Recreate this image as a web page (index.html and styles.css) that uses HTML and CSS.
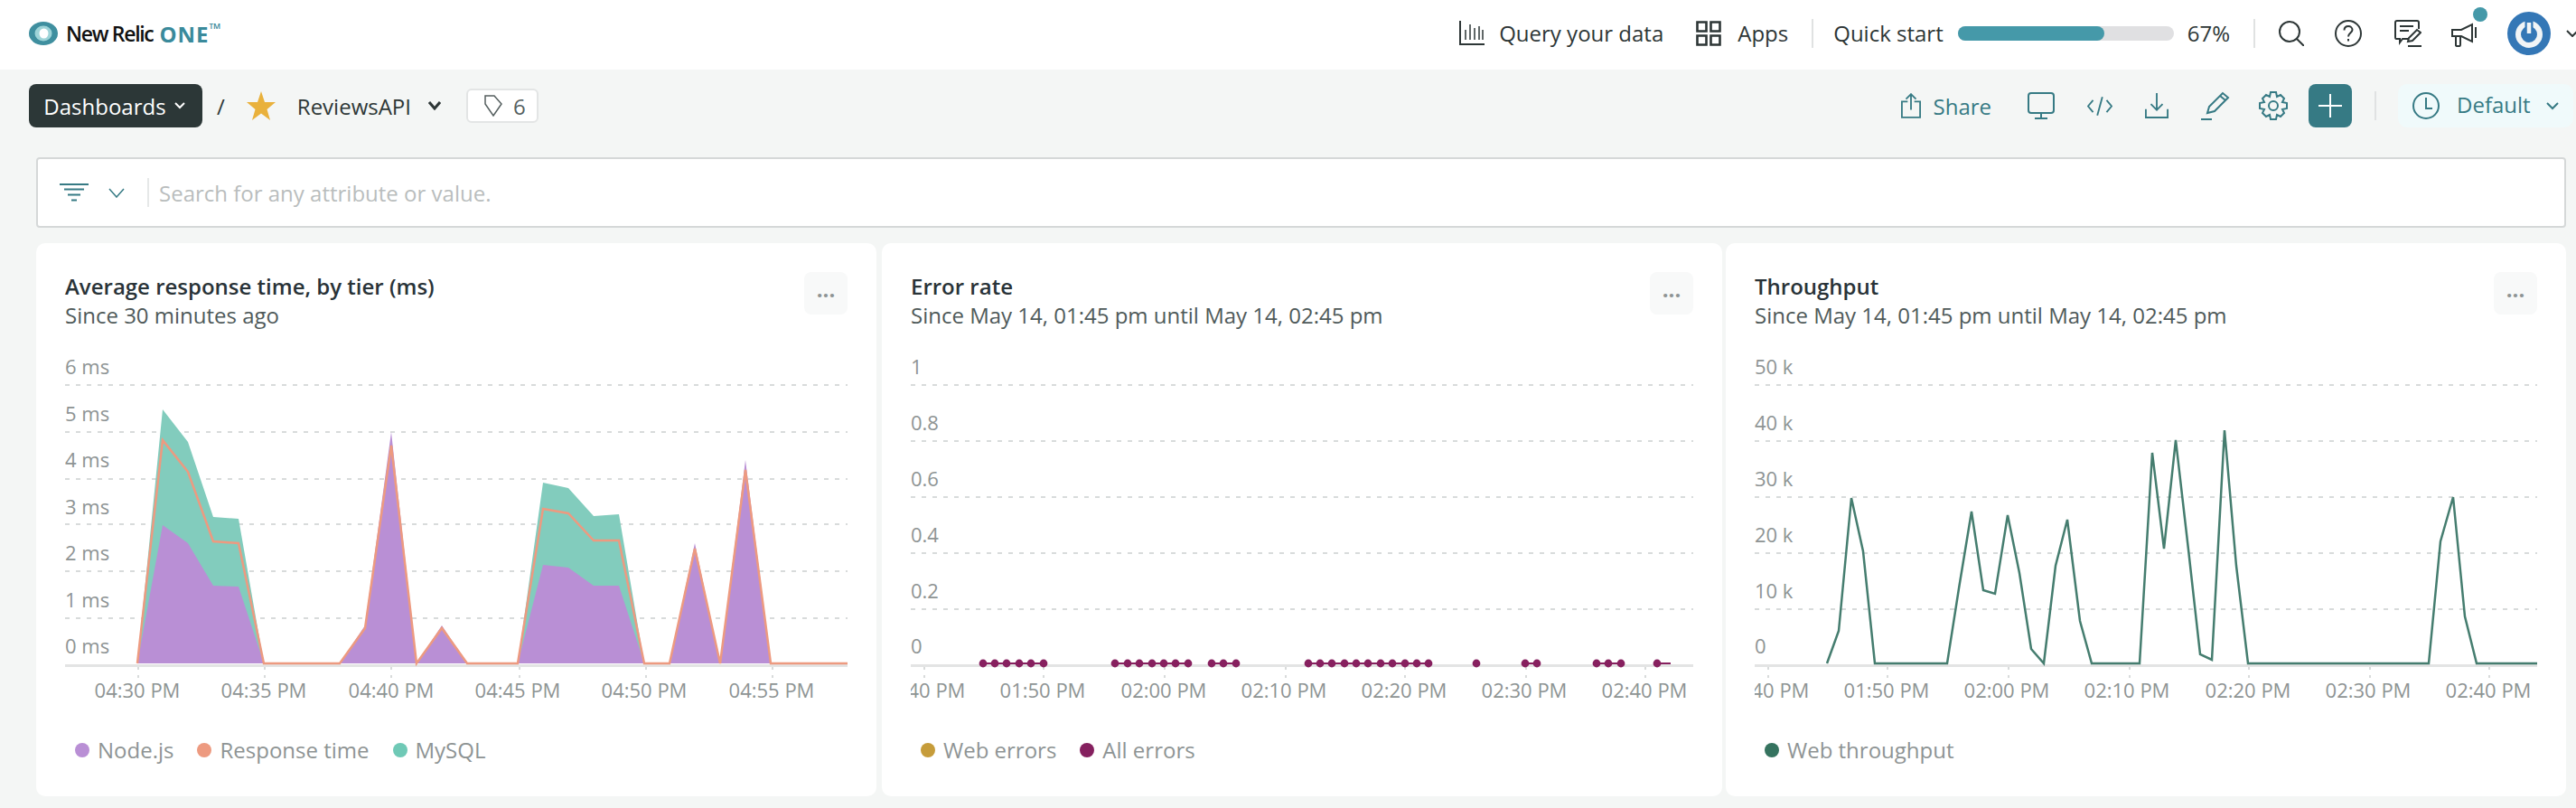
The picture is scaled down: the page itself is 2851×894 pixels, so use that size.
FILE: index.html
```html
<!DOCTYPE html>
<html lang="en">

<head>
    <meta charset="UTF-8">
    <title>ReviewsAPI - New Relic ONE</title>
    <link rel="stylesheet" href="styles.css">
</head>

<body>
    <div class="topbar">
        <div class="logo">
            <svg class="logo-mark" viewBox="0 0 32 32"><ellipse cx="16" cy="16" rx="16" ry="13" fill="#3f8f9f"/><ellipse cx="16" cy="16" rx="9.500" ry="8.500" fill="#9ed4d8"/><ellipse cx="16.500" cy="16" rx="5" ry="5.500" fill="#fff"/></svg>
            <span class="logo-name">New Relic</span>
            <span class="logo-one">ONE<sup>™</sup></span>
        </div>
        <div class="topnav">
            <svg class="nav-icon" viewBox="0 0 28 28"><path d="M1 0V26H28"/><path stroke-width="1.500" d="M7 10V21M12 4V21M17 8V21M22 6V21M26 10V21"/></svg>
            <span class="nav-text query">Query your data</span>
            <svg class="nav-icon" viewBox="0 0 28 28"><path stroke-width="2.600" d="M1.500 1.500H11.500V11.500H1.500ZM16.500 1.500H26.500V11.500H16.500ZM1.500 16.500H11.500V26.500H1.500ZM16.500 16.500H26.500V26.500H16.500Z"/></svg>
            <span class="nav-text apps">Apps</span>
            <span class="divider"></span>
            <span class="nav-text quick">Quick start</span>
            <div class="progress"><div class="progress-fill" style="width: 68%"></div></div>
            <span class="nav-text percent">67%</span>
            <span class="divider"></span>
            <svg class="nav-icon search" viewBox="0 0 28 28"><circle cx="12" cy="12" r="11"/><path d="M20 20L28 28"/></svg>
            <svg class="nav-icon help" viewBox="0 0 30 30"><circle cx="15" cy="15" r="14"/><path d="M10.500 11.500C10.500 8.500 12.500 7 15 7C17.500 7 19.500 8.800 19.500 11C19.500 14 15 14.500 15 18.500M15 21V23.500"/></svg>
            <svg class="nav-icon feedback" viewBox="0 0 30 30"><path d="M16 21H9L6 25V21H2C1 21 1 20 1 19V3C1 2 2 1 3 1H25C26 1 27 2 27 3V10M6 7H21M6 12H16"/><path d="M15 24L16 20L25 11L29 14L20 23ZM15 29H30"/></svg>
            <div class="announce">
                <svg class="nav-icon megaphone" viewBox="0 0 34 30"><path d="M2 11H12L24 5V24L12 18H2ZM6 18V28C6 29 7 29 8 29H10C11 29 11 28 11 27V18M28 8V20"/></svg>
                <span class="badge"></span>
            </div>
            <svg class="avatar" viewBox="0 0 48 48"><circle cx="24" cy="24" r="24" fill="#3477b6"/><circle cx="24" cy="25" r="12" fill="none" stroke="#f1f4f6" stroke-width="6"/><path d="M24 8V22" stroke="#3477b6" stroke-width="9"/><path d="M24 12V24" stroke="#f1f4f6" stroke-width="4.500"/></svg>
            <svg class="nav-icon caret" viewBox="0 0 14 8"><path d="M1 1L7 7L13 1"/></svg>
        </div>
    </div>

    <div class="toolbar">
        <button class="crumb-btn">Dashboards <svg class="crumb-caret" viewBox="0 0 12 8"><path d="M1 1L6 6L11 1"/></svg></button>
        <span class="slash">/</span>
        <svg class="star" viewBox="0 0 32 32"><path d="M16 0L20 12H32L22.500 20L26 32L16 24.500L6 32L9.500 20L0 12H12Z"/></svg>
        <span class="dash-name">ReviewsAPI</span>
        <svg class="name-caret" viewBox="0 0 14 10"><path d="M1 1L7 8L13 1"/></svg>
        <span class="tag-box">
            <svg class="tag-icon" viewBox="0 0 20 24"><path d="M1 1H11L19 10L10 23L1 10Z"/></svg>
            6
        </span>
        <div class="actions">
            <svg class="act-icon share-icon" viewBox="0 0 24 30"><path d="M8 10H1V29H23V10H16M12 20V1M6 7L12 1L18 7"/></svg>
            <span class="share">Share</span>
            <svg class="act-icon monitor" viewBox="0 0 30 30"><path d="M4 1H26C28 1 29 2 29 4V20C29 22 28 23 26 23H4C2 23 1 22 1 20V4C1 2 2 1 4 1ZM15 23V29M8 29H22"/></svg>
            <svg class="act-icon code" viewBox="0 0 30 24"><path d="M7 5L1 12L7 19M23 5L29 12L23 19M18 1L12 23"/></svg>
            <svg class="act-icon download" viewBox="0 0 28 30"><path d="M14 0V20M7 13L14 20L21 13M1 19V29H27V19"/></svg>
            <svg class="act-icon pencil" viewBox="0 0 32 32"><path d="M7 24L9 17L24 2L30 7L15 22ZM21 5L27 10M0 31H12"/></svg>
            <svg class="act-icon gear" viewBox="0 0 32 32"><circle cx="16" cy="16" r="5"/><path d="M13 1H19L20 6L24 4L28 8L26 12L31 13V19L26 20L28 24L24 28L20 26L19 31H13L12 26L8 28L4 24L6 20L1 19V13L6 12L4 8L8 4L12 6Z"/></svg>
            <button class="add-btn"><svg viewBox="0 0 26 26"><path d="M13 0V26M0 13H26"/></svg></button>
            <span class="divider tool-divider"></span>
            <button class="time-btn">
                <svg class="act-icon clock" viewBox="0 0 30 30"><circle cx="15" cy="15" r="14"/><path d="M15 6V18H22"/></svg>
                <span class="time-text">Default</span>
                <svg class="time-caret" viewBox="0 0 14 9"><path d="M1 1L7 7L13 1"/></svg>
            </button>
        </div>
    </div>

    <div class="filter-bar">
        <svg class="filter-icon" viewBox="0 0 32 20"><path d="M0 1H32M5 6.500H27M9 12.500H23M13 18.500H19"/></svg>
        <svg class="filter-caret" viewBox="0 0 18 11"><path d="M1 1L9 10L17 1"/></svg>
        <span class="filter-sep"></span>
        <span class="filter-hint">Search for any attribute or value.</span>
    </div>

    <div class="cards">
        <div class="card">
            <div class="card-head">
                <div>
                    <h2>Average response time, by tier (ms)</h2>
                    <p>Since 30 minutes ago</p>
                </div>
                <button class="menu-btn">...</button>
            </div>
            <svg class="chart" viewBox="72 390 866 390">
                <path class="grid" d="M72 426H938M72 478H938M72 530H938M72 580H938M72 632H938M72 684H938"/>
                <path class="axis" d="M72 736.500H938"/>
                <path class="ticks" d="M153 738V750M293 738V750M433 738V750M575 738V750M715 738V750M855 738V750"/>
                <text x="72" y="414">6 ms</text>
                <text x="72" y="466">5 ms</text>
                <text x="72" y="517">4 ms</text>
                <text x="72" y="569">3 ms</text>
                <text x="72" y="620">2 ms</text>
                <text x="72" y="672">1 ms</text>
                <text x="72" y="723">0 ms</text>
                <path fill="#82ccbd" d="M152 734L180 453L208 489L236 572L264 574L292 734ZM573 734L601 534L629 540L657 571L685 569L713 734Z"/>
                <path fill="#b98fd5" d="M152 734L180 581L208 601L236 648L264 649L292 734L376 734L404 692L433 478L461 734L489 692L517 734L573 734L601 625L629 628L657 648L685 648L713 734L741 734L769 601L797 734L825 509L853 734Z"/>
                <polyline class="line-orange" points="152,734 180,487 208,522 236,599 264,601 292,734 376,734 404,695 433,493 461,734 489,695 517,734 573,734 601,563 629,568 657,598 685,598 713,734 741,734 769,607 797,734 825,520 853,734 938,734"/>
                <text x="152" y="772" text-anchor="middle">04:30 PM</text>
                <text x="292" y="772" text-anchor="middle">04:35 PM</text>
                <text x="433" y="772" text-anchor="middle">04:40 PM</text>
                <text x="573" y="772" text-anchor="middle">04:45 PM</text>
                <text x="713" y="772" text-anchor="middle">04:50 PM</text>
                <text x="854" y="772" text-anchor="middle">04:55 PM</text>
            </svg>
            <div class="legend">
                <span class="legend-item"><i class="dot dot-node"></i>Node.js</span>
                <span class="legend-item"><i class="dot dot-resp"></i>Response time</span>
                <span class="legend-item"><i class="dot dot-mysql"></i>MySQL</span>
            </div>
        </div>

        <div class="card">
            <div class="card-head">
                <div>
                    <h2>Error rate</h2>
                    <p>Since May 14, 01:45 pm until May 14, 02:45 pm</p>
                </div>
                <button class="menu-btn">...</button>
            </div>
            <svg class="chart" viewBox="1008 390 866 390">
                <path class="grid" d="M1008 426H1874M1008 488H1874M1008 550H1874M1008 612H1874M1008 674H1874"/>
                <path class="axis" d="M1008 736.500H1874"/>
                <path class="ticks" d="M1023 738V750M1155 738V750M1289 738V750M1423 738V750M1555 738V750M1689 738V750M1821 738V750"/>
                <text x="1008" y="414">1</text>
                <text x="1008" y="476">0.8</text>
                <text x="1008" y="538">0.6</text>
                <text x="1008" y="600">0.4</text>
                <text x="1008" y="662">0.2</text>
                <text x="1008" y="723">0</text>
                <path class="line-errors" d="M1088 734H1155M1234 734H1315M1341 734H1368M1448 734H1581M1688 734H1701M1767 734H1794M1834 734H1849"/>
                <g class="err-dots">
                    <circle cx="1088" cy="734" r="4.400"/><circle cx="1101" cy="734" r="4.400"/><circle cx="1114" cy="734" r="4.400"/><circle cx="1128" cy="734" r="4.400"/><circle cx="1141" cy="734" r="4.400"/><circle cx="1155" cy="734" r="4.400"/>
                    <circle cx="1234" cy="734" r="4.400"/><circle cx="1248" cy="734" r="4.400"/><circle cx="1261" cy="734" r="4.400"/><circle cx="1275" cy="734" r="4.400"/><circle cx="1288" cy="734" r="4.400"/><circle cx="1301" cy="734" r="4.400"/><circle cx="1315" cy="734" r="4.400"/>
                    <circle cx="1341" cy="734" r="4.400"/><circle cx="1354" cy="734" r="4.400"/><circle cx="1368" cy="734" r="4.400"/>
                    <circle cx="1448" cy="734" r="4.400"/><circle cx="1461" cy="734" r="4.400"/><circle cx="1474" cy="734" r="4.400"/><circle cx="1488" cy="734" r="4.400"/><circle cx="1501" cy="734" r="4.400"/><circle cx="1514" cy="734" r="4.400"/><circle cx="1528" cy="734" r="4.400"/><circle cx="1541" cy="734" r="4.400"/><circle cx="1555" cy="734" r="4.400"/><circle cx="1568" cy="734" r="4.400"/><circle cx="1581" cy="734" r="4.400"/>
                    <circle cx="1634" cy="734" r="4.400"/>
                    <circle cx="1688" cy="734" r="4.400"/><circle cx="1701" cy="734" r="4.400"/>
                    <circle cx="1767" cy="734" r="4.400"/><circle cx="1780" cy="734" r="4.400"/><circle cx="1794" cy="734" r="4.400"/>
                    <circle cx="1834" cy="734" r="4.400"/>
                </g>
                <text x="1021" y="772" text-anchor="middle">01:40 PM</text>
                <text x="1154" y="772" text-anchor="middle">01:50 PM</text>
                <text x="1288" y="772" text-anchor="middle">02:00 PM</text>
                <text x="1421" y="772" text-anchor="middle">02:10 PM</text>
                <text x="1554" y="772" text-anchor="middle">02:20 PM</text>
                <text x="1687" y="772" text-anchor="middle">02:30 PM</text>
                <text x="1820" y="772" text-anchor="middle">02:40 PM</text>
            </svg>
            <div class="legend">
                <span class="legend-item"><i class="dot dot-web"></i>Web errors</span>
                <span class="legend-item"><i class="dot dot-all"></i>All errors</span>
            </div>
        </div>

        <div class="card">
            <div class="card-head">
                <div>
                    <h2>Throughput</h2>
                    <p>Since May 14, 01:45 pm until May 14, 02:45 pm</p>
                </div>
                <button class="menu-btn">...</button>
            </div>
            <svg class="chart" viewBox="1942 390 866 390">
                <path class="grid" d="M1942 426H2808M1942 488H2808M1942 550H2808M1942 612H2808M1942 674H2808"/>
                <path class="axis" d="M1942 736.500H2808"/>
                <path class="ticks" d="M1957 738V750M2089 738V750M2223 738V750M2357 738V750M2489 738V750M2623 738V750M2755 738V750"/>
                <text x="1942" y="414">50 k</text>
                <text x="1942" y="476">40 k</text>
                <text x="1942" y="538">30 k</text>
                <text x="1942" y="600">20 k</text>
                <text x="1942" y="662">10 k</text>
                <text x="1942" y="723">0</text>
                <polyline class="line-through" points="2022,734 2035,698 2049,551 2062,610 2075,734 2155,734 2168,651 2182,566 2195,653 2208,657 2222,570 2235,634 2248,718 2262,734 2275,626 2288,575 2302,687 2315,734 2368,734 2382,501 2395,607 2408,487 2422,608 2435,724 2448,730 2462,476 2475,626 2488,734 2688,734 2701,599 2715,550 2728,682 2741,734 2808,734"/>
                <text x="1955" y="772" text-anchor="middle">01:40 PM</text>
                <text x="2088" y="772" text-anchor="middle">01:50 PM</text>
                <text x="2221" y="772" text-anchor="middle">02:00 PM</text>
                <text x="2354" y="772" text-anchor="middle">02:10 PM</text>
                <text x="2488" y="772" text-anchor="middle">02:20 PM</text>
                <text x="2621" y="772" text-anchor="middle">02:30 PM</text>
                <text x="2754" y="772" text-anchor="middle">02:40 PM</text>
            </svg>
            <div class="legend">
                <span class="legend-item"><i class="dot dot-through"></i>Web throughput</span>
            </div>
        </div>
    </div>
</body>

</html>
```

FILE: styles.css
```css
body {
    margin: 0;
    background-color: #f4f6f5;
    color: #2d3636;
    font-family: "Open Sans", sans-serif;
    overflow: hidden;
}

button {
    font-family: inherit;
    border: none;
    cursor: pointer;
}

svg {
    display: block;
    flex: none;
}

/* top bar */
.topbar {
    display: flex;
    align-items: center;
    box-sizing: border-box;
    height: 77px;
    padding: 0 0 3px 32px;
    background-color: #fff;
}

.logo {
    display: flex;
    align-items: center;
}

.logo-mark {
    width: 32px;
    height: 32px;
    margin-right: 9px;
}

.logo-name {
    font-size: 23px;
    font-weight: 600;
    color: #111;
    letter-spacing: -1.3px;
    margin-right: 7px;
}

.logo-one {
    font-size: 24px;
    font-weight: 700;
    color: #3a8a9b;
    letter-spacing: 1px;
}

.logo-one sup {
    font-size: 17px;
    font-weight: 400;
    line-height: 0;
}

.topnav {
    display: flex;
    align-items: center;
    margin-left: auto;
}

.nav-icon {
    width: 28px;
    height: 28px;
    fill: none;
    stroke: #2d3636;
    stroke-width: 2;
}

.nav-text {
    font-size: 24px;
    line-height: 32px;
    white-space: nowrap;
}

.query {
    margin: 0 36px 0 16px;
}

.apps {
    margin: 0 26px 0 18px;
}

.divider {
    width: 2px;
    height: 32px;
    background-color: #e0e2e2;
}

.quick {
    margin: 0 16px 0 22px;
}

.progress {
    width: 239px;
    height: 16px;
    border-radius: 8px;
    background-color: #e0e0e2;
}

.progress-fill {
    height: 100%;
    border-radius: 8px;
    background-color: #4599a9;
}

.percent {
    margin: 0 26px 0 15px;
}

.search {
    margin-left: 26px;
}

.help {
    width: 30px;
    height: 30px;
    margin-left: 34px;
}

.feedback {
    width: 30px;
    height: 30px;
    margin-left: 36px;
}

.announce {
    position: relative;
    margin-left: 32px;
}

.megaphone {
    width: 34px;
    height: 30px;
}

.badge {
    position: absolute;
    top: -14px;
    right: -7px;
    width: 16px;
    height: 16px;
    border-radius: 50%;
    background-color: #4599a9;
}

.avatar {
    width: 48px;
    height: 48px;
    margin-left: 29px;
}

.caret {
    width: 14px;
    height: 8px;
    margin-left: 17px;
    margin-right: -3px;
}

/* dashboard toolbar */
.toolbar {
    display: flex;
    align-items: center;
    height: 48px;
    padding: 16px 3px 0 32px;
}

.crumb-btn {
    display: flex;
    align-items: center;
    justify-content: center;
    gap: 9px;
    width: 192px;
    height: 48px;
    padding: 0 3px 0 0;
    border-radius: 8px;
    background-color: #2c3737;
    color: #fff;
    font-size: 24px;
}

.crumb-caret {
    width: 12px;
    height: 8px;
    fill: none;
    stroke: #fff;
    stroke-width: 2;
}

.slash {
    margin-left: 16px;
    font-size: 24px;
}

.star {
    width: 32px;
    height: 32px;
    margin-left: 24px;
    fill: #e9b13c;
}

.dash-name {
    margin-left: 24px;
    font-size: 24px;
}

.name-caret {
    width: 14px;
    height: 10px;
    margin-left: 19px;
    fill: none;
    stroke: #2d3636;
    stroke-width: 3;
}

.tag-box {
    display: flex;
    align-items: center;
    gap: 12px;
    box-sizing: border-box;
    width: 80px;
    height: 38px;
    margin-left: 28px;
    padding-left: 18px;
    border: 2px solid #e3e5e5;
    border-radius: 6px;
    background-color: #fff;
    color: #555f5f;
    font-size: 24px;
}

.tag-icon {
    width: 20px;
    height: 24px;
    fill: none;
    stroke: #555f5f;
    stroke-width: 1.5;
}

.actions {
    display: flex;
    align-items: center;
    margin-left: auto;
}

.act-icon {
    width: 24px;
    height: 30px;
    fill: none;
    stroke: #367a84;
    stroke-width: 2;
}

.share-icon {
    width: 22px;
    height: 28px;
}

.share {
    margin: 0 40px 0 14px;
    color: #367a84;
    font-size: 24px;
}

.monitor {
    width: 30px;
    height: 30px;
}

.code {
    width: 28px;
    height: 23px;
    margin-left: 36px;
}

.download {
    width: 26px;
    height: 28px;
    margin-left: 36px;
}

.pencil {
    width: 32px;
    height: 32px;
    margin-left: 36px;
}

.gear {
    width: 32px;
    height: 32px;
    margin-left: 32px;
}

.add-btn {
    display: flex;
    align-items: center;
    justify-content: center;
    width: 48px;
    height: 48px;
    margin-left: 23px;
    padding: 0;
    border-radius: 8px;
    background-color: #367a84;
}

.add-btn svg {
    width: 26px;
    height: 26px;
    fill: none;
    stroke: #fff;
    stroke-width: 2;
}

.tool-divider {
    margin-left: 25px;
}

.time-btn {
    display: flex;
    align-items: center;
    width: 194px;
    height: 48px;
    margin-left: 24px;
    padding: 0 0 0 16px;
    border-radius: 10px;
    background-color: #f0fafb;
    color: #367a84;
    font-size: 24px;
}

.clock {
    width: 30px;
    height: 30px;
    margin-right: 19px;
}

.time-text {
    margin-top: -3px;
}

.time-caret {
    width: 14px;
    height: 9px;
    margin-left: 17px;
    fill: none;
    stroke: #367a84;
    stroke-width: 2;
}

/* filter bar */
.filter-bar {
    display: flex;
    align-items: center;
    box-sizing: border-box;
    height: 78px;
    margin: 33px 11px 0 40px;
    padding-left: 24px;
    border: 2px solid #d5d8d8;
    border-radius: 4px;
    background-color: #fff;
}

.filter-icon {
    width: 32px;
    height: 20px;
    fill: none;
    stroke: #367a84;
    stroke-width: 2;
}

.filter-caret {
    width: 18px;
    height: 11px;
    margin-left: 22px;
    fill: none;
    stroke: #367a84;
    stroke-width: 1.5;
}

.filter-sep {
    width: 2px;
    height: 32px;
    margin-left: 25px;
    background-color: #e6e8e8;
}

.filter-hint {
    margin-left: 11px;
    color: #b9bdbd;
    font-size: 24px;
}

/* cards */
.cards {
    display: flex;
    margin: 17px 0 0 40px;
}

.card {
    box-sizing: border-box;
    width: 930px;
    height: 612px;
    padding: 32px;
    border-radius: 10px;
    background-color: #fff;
}

.card:nth-child(2) {
    margin: 0 4px 0 6px;
}

.card-head {
    display: flex;
    justify-content: space-between;
    height: 64px;
}

.card-head h2 {
    margin: 0;
    font-size: 24px;
    font-weight: 600;
    line-height: 32px;
    color: #293338;
}

.card-head p {
    margin: 0;
    font-size: 24px;
    line-height: 32px;
    color: #4f5a5a;
}

.menu-btn {
    width: 48px;
    height: 47px;
    padding: 0 0 10px;
    border-radius: 8px;
    background-color: #f8f9f9;
    color: #8e9494;
    font-size: 24px;
    font-weight: 700;
}

.chart {
    width: 866px;
    height: 390px;
    margin-top: 25px;
}

.chart text {
    fill: #8e9494;
    font-size: 22px;
}

.grid {
    fill: none;
    stroke: #d8dbdb;
    stroke-width: 2;
    stroke-dasharray: 5 7;
}

.axis {
    stroke: #e3e4e4;
    stroke-width: 3;
}

.ticks {
    stroke: #d8dbdb;
    stroke-width: 2;
    stroke-dasharray: 3 6;
}

.line-orange {
    fill: none;
    stroke: #ed9a80;
    stroke-width: 2.5;
}

.line-errors {
    stroke: #87205f;
    stroke-width: 2;
}

.err-dots {
    fill: #87205f;
}

.line-through {
    fill: none;
    stroke: #457d6f;
    stroke-width: 2.5;
}

.legend {
    display: flex;
    gap: 26px;
    margin-top: 34px;
    padding-left: 11px;
}

.legend-item {
    display: flex;
    align-items: center;
    gap: 9px;
    color: #8e9494;
    font-size: 24px;
    line-height: 32px;
}

.dot {
    width: 16px;
    height: 16px;
    border-radius: 50%;
}

.dot-node {
    background-color: #b98fd5;
}

.dot-resp {
    background-color: #ed9a80;
}

.dot-mysql {
    background-color: #6fc9b6;
}

.dot-web {
    background-color: #c69c3a;
}

.dot-all {
    background-color: #85205f;
}

.dot-through {
    background-color: #35735f;
}
```
